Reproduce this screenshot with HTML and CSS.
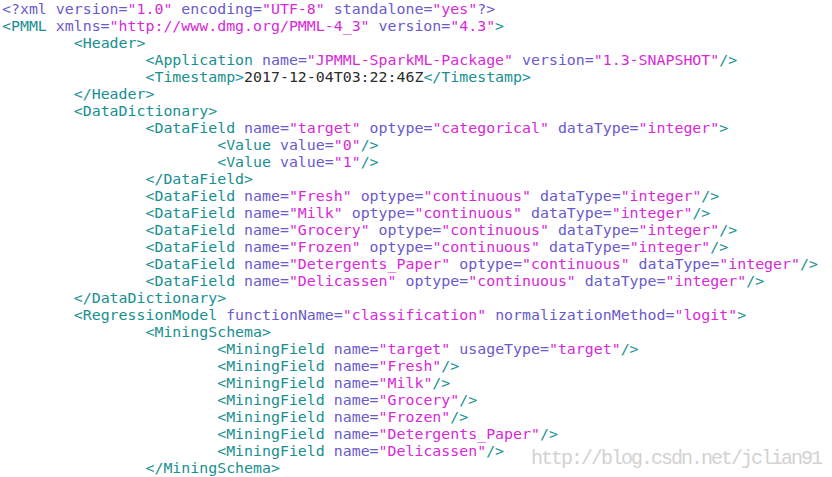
FILE: index.html
```
<!DOCTYPE html>
<html>
<head>
<meta charset="utf-8">
<link rel="stylesheet" href="styles.css">
</head>
<body>
<div class="page">
<pre class="code"><span class="a">&lt;?xml version=</span><span class="s">"1.0"</span><span class="a"> encoding=</span><span class="s">"UTF-8"</span><span class="a"> standalone=</span><span class="s">"yes"</span><span class="a">?&gt;</span>
<span class="t">&lt;PMML</span> <span class="a">xmlns=</span><span class="s">"http://www.dmg.org/PMML-4_3"</span> <span class="a">version=</span><span class="s">"4.3"</span><span class="t">&gt;</span>
	<span class="t">&lt;Header&gt;</span>
		<span class="t">&lt;Application</span> <span class="a">name=</span><span class="s">"JPMML-SparkML-Package"</span> <span class="a">version=</span><span class="s">"1.3-SNAPSHOT"</span><span class="t">/&gt;</span>
		<span class="t">&lt;Timestamp&gt;</span>2017-12-04T03:22:46Z<span class="t">&lt;/Timestamp&gt;</span>
	<span class="t">&lt;/Header&gt;</span>
	<span class="t">&lt;DataDictionary&gt;</span>
		<span class="t">&lt;DataField</span> <span class="a">name=</span><span class="s">"target"</span> <span class="a">optype=</span><span class="s">"categorical"</span> <span class="a">dataType=</span><span class="s">"integer"</span><span class="t">&gt;</span>
			<span class="t">&lt;Value</span> <span class="a">value=</span><span class="s">"0"</span><span class="t">/&gt;</span>
			<span class="t">&lt;Value</span> <span class="a">value=</span><span class="s">"1"</span><span class="t">/&gt;</span>
		<span class="t">&lt;/DataField&gt;</span>
		<span class="t">&lt;DataField</span> <span class="a">name=</span><span class="s">"Fresh"</span> <span class="a">optype=</span><span class="s">"continuous"</span> <span class="a">dataType=</span><span class="s">"integer"</span><span class="t">/&gt;</span>
		<span class="t">&lt;DataField</span> <span class="a">name=</span><span class="s">"Milk"</span> <span class="a">optype=</span><span class="s">"continuous"</span> <span class="a">dataType=</span><span class="s">"integer"</span><span class="t">/&gt;</span>
		<span class="t">&lt;DataField</span> <span class="a">name=</span><span class="s">"Grocery"</span> <span class="a">optype=</span><span class="s">"continuous"</span> <span class="a">dataType=</span><span class="s">"integer"</span><span class="t">/&gt;</span>
		<span class="t">&lt;DataField</span> <span class="a">name=</span><span class="s">"Frozen"</span> <span class="a">optype=</span><span class="s">"continuous"</span> <span class="a">dataType=</span><span class="s">"integer"</span><span class="t">/&gt;</span>
		<span class="t">&lt;DataField</span> <span class="a">name=</span><span class="s">"Detergents_Paper"</span> <span class="a">optype=</span><span class="s">"continuous"</span> <span class="a">dataType=</span><span class="s">"integer"</span><span class="t">/&gt;</span>
		<span class="t">&lt;DataField</span> <span class="a">name=</span><span class="s">"Delicassen"</span> <span class="a">optype=</span><span class="s">"continuous"</span> <span class="a">dataType=</span><span class="s">"integer"</span><span class="t">/&gt;</span>
	<span class="t">&lt;/DataDictionary&gt;</span>
	<span class="t">&lt;RegressionModel</span> <span class="a">functionName=</span><span class="s">"classification"</span> <span class="a">normalizationMethod=</span><span class="s">"logit"</span><span class="t">&gt;</span>
		<span class="t">&lt;MiningSchema&gt;</span>
			<span class="t">&lt;MiningField</span> <span class="a">name=</span><span class="s">"target"</span> <span class="a">usageType=</span><span class="s">"target"</span><span class="t">/&gt;</span>
			<span class="t">&lt;MiningField</span> <span class="a">name=</span><span class="s">"Fresh"</span><span class="t">/&gt;</span>
			<span class="t">&lt;MiningField</span> <span class="a">name=</span><span class="s">"Milk"</span><span class="t">/&gt;</span>
			<span class="t">&lt;MiningField</span> <span class="a">name=</span><span class="s">"Grocery"</span><span class="t">/&gt;</span>
			<span class="t">&lt;MiningField</span> <span class="a">name=</span><span class="s">"Frozen"</span><span class="t">/&gt;</span>
			<span class="t">&lt;MiningField</span> <span class="a">name=</span><span class="s">"Detergents_Paper"</span><span class="t">/&gt;</span>
			<span class="t">&lt;MiningField</span> <span class="a">name=</span><span class="s">"Delicassen"</span><span class="t">/&gt;</span>
		<span class="t">&lt;/MiningSchema&gt;</span></pre>
<div class="watermark">http://blog.csdn.net/jclian91</div>
</div>
</body>
</html>
```
FILE: styles.css
```
html, body {
  margin: 0;
  padding: 0;
  background: #ffffff;
}
.page {
  position: relative;
  width: 832px;
  height: 477px;
  overflow: hidden;
}
.code {
  margin: 0;
  padding: 1px 0 0 2px;
  font-family: "DejaVu Sans Mono", monospace;
  font-size: 14.9px;
  line-height: 17px;
  tab-size: 8;
  -moz-tab-size: 8;
  color: #2b2b2b;
  white-space: pre;
}
.t { color: #17908f; }
.a { color: #6a5acd; }
.s { color: #d829d8; }
.watermark {
  position: absolute;
  left: 531px;
  top: 447px;
  font-family: "Liberation Mono", monospace;
  font-size: 20px;
  letter-spacing: -2px;
  line-height: 24px;
  color: #d2d2d2;
}
```
